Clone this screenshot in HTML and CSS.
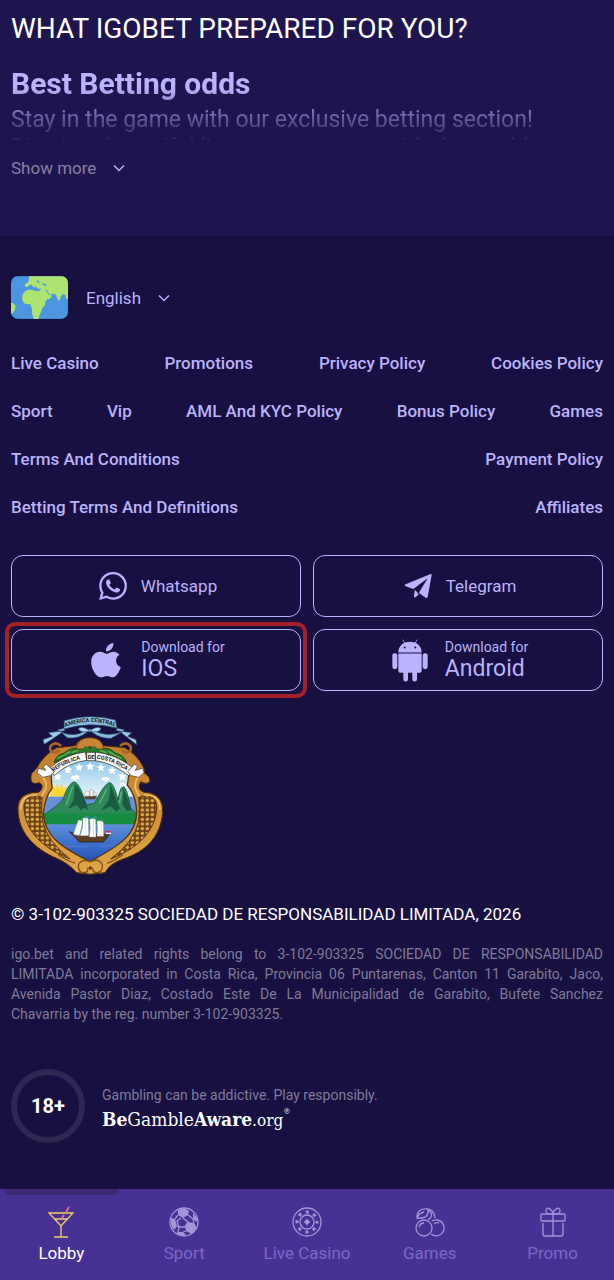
FILE: index.html
```
<!DOCTYPE html>
<html lang="en">
    <head>
        <meta charset="utf-8">
        <meta name="viewport" content="width=device-width, initial-scale=1">
        <title>IGOBET</title>
        <link rel="stylesheet" href="styles.css">
    </head>
    <body>
        <section class="about">
            <h1 class="about-title">WHAT IGOBET PREPARED FOR YOU?</h1>
            <div class="about-text">
                <h2>Best Betting odds</h2>
                <p>Stay in the game with our exclusive betting section!</p>
                <p>Dive into beautiful live sports events with the world</p>
            </div>
            <button type="button" class="toggle show-more">
                Show more
                <svg class="chevron" viewBox="0 0 12 8"><path d="M1 1.5l5 5 5-5"/></svg>
            </button>
        </section>

        <footer class="footer">
            <button type="button" class="toggle lang">
                <svg class="flag" viewBox="0 0 172 129">
                    <rect width="172" height="129" fill="#4b96df"/>
                    <g fill="#ade471">
                        <path d="M55 0h117v68l-5 2-3-13-8-3-6 8-3 12-6-3-5-15-8-3-8 2 3 7-7 7-6 0-7 9-1 11-8 7-3 12-5 9-3 12h-14l-5-14-1-17-5-13-15-1-8-8-2-12 3-11 8-8 8-4 12 0 10 4 14-1 2-7-9 1-6-7-7 3-6-8-6 0-5 7-8-1-1-8 9-5 3-7z"/>
                        <path d="M0 80l8 2 6 10-3 11-6 8-5 3z"/>
                    </g>
                    <path d="M75 15l7-2 6 9-4-1zM92 22l12 1 4 6-9-1zM105 39l13 18-3 1-12-17z" fill="#4b96df"/>
                </svg>
                <span class="lang-name">English</span>
                <svg class="chevron" viewBox="0 0 12 8"><path d="M1 1.5l5 5 5-5"/></svg>
            </button>

            <nav class="links">
                <a href="#">Live Casino</a>
                <a href="#">Promotions</a>
                <a href="#">Privacy Policy</a>
                <a href="#">Cookies Policy</a>
                <a href="#">Sport</a>
                <a href="#">Vip</a>
                <a href="#">AML And KYC Policy</a>
                <a href="#">Bonus Policy</a>
                <a href="#">Games</a>
                <a href="#">Terms And Conditions</a>
                <a href="#">Payment Policy</a>
                <a href="#">Betting Terms And Definitions</a>
                <a href="#">Affiliates</a>
            </nav>

            <div class="apps">
                <a href="#" class="app">
                    <svg class="icon-social" viewBox="0 0 24 24"><path d="M17.472 14.382c-.297-.149-1.758-.867-2.03-.967-.273-.099-.471-.148-.67.15-.197.297-.767.966-.94 1.164-.173.199-.347.223-.644.075-.297-.15-1.255-.463-2.39-1.475-.883-.788-1.48-1.761-1.653-2.059-.173-.297-.018-.458.13-.606.134-.133.298-.347.446-.52.149-.174.198-.298.298-.497.099-.198.05-.371-.025-.52-.075-.149-.669-1.612-.916-2.207-.242-.579-.487-.5-.669-.51-.173-.008-.371-.01-.57-.01-.198 0-.52.074-.792.372-.272.297-1.04 1.016-1.04 2.479 0 1.462 1.065 2.875 1.213 3.074.149.198 2.096 3.2 5.077 4.487.709.306 1.262.489 1.694.625.712.227 1.36.195 1.871.118.571-.085 1.758-.719 2.006-1.413.248-.694.248-1.289.173-1.413-.074-.124-.272-.198-.57-.347m-5.421 7.403h-.004a9.87 9.87 0 01-5.031-1.378l-.361-.214-3.741.982.998-3.648-.235-.374a9.86 9.86 0 01-1.51-5.26c.001-5.45 4.436-9.884 9.888-9.884 2.64 0 5.122 1.03 6.988 2.898a9.825 9.825 0 012.893 6.994c-.003 5.45-4.437 9.884-9.885 9.884m8.413-18.297A11.815 11.815 0 0012.05 0C5.495 0 .16 5.335.157 11.892c0 2.096.547 4.142 1.588 5.945L.057 24l6.305-1.654a11.882 11.882 0 005.683 1.448h.005c6.554 0 11.89-5.335 11.893-11.893a11.821 11.821 0 00-3.48-8.413z"/></svg>
                    <span class="app-name">Whatsapp</span>
                </a>
                <a href="#" class="app">
                    <svg class="icon-social" viewBox="0 0 84 84"><path d="M81 6q2 0 2 3L71 75q-2 5-6 2L46 64q-2-1 0-4L71 19 28 51 5 43q-6-3 0-6L78 7zM32 54l7 5 5 9-12 9q-2-1-2-5z"/></svg>
                    <span class="app-name">Telegram</span>
                </a>
                <a href="#" class="app app-marked">
                    <svg class="icon-ios" viewBox="0 0 88 104"><path d="M66 0c1 14-9 25-22 25C43 12 53 2 66 0zM46 32c5 0 11-6 21-6 7 0 13 4 17 9-15 9-13 30 4 37-4 12-13 29-23 30-7 0-10-4-18-4s-12 4-18 4C15 102 0 77 0 57 0 39 11 26 26 26c9 0 15 6 20 6z"/></svg>
                    <span class="app-label">
                        <small>Download for</small>
                        IOS
                    </span>
                </a>
                <a href="#" class="app">
                    <svg class="icon-android" viewBox="0 0 108 128">
                        <path d="M19 40h70c0-13-7-23-18-29l6-9-2-1-6 9c-10-3-20-3-30 0l-6-9-2 1 6 9C26 17 19 27 19 40z"/>
                        <path d="M19 43h70v50q0 8-8 8H75v19a7 7 0 01-14 0v-19H48v19a7 7 0 01-14 0v-19h-7q-8 0-8-8z"/>
                        <rect x="1" y="42" width="15" height="48" rx="7"/>
                        <rect x="92" y="42" width="15" height="48" rx="7"/>
                        <circle cx="38" cy="25" r="3" fill="#171040"/>
                        <circle cx="70" cy="25" r="3" fill="#171040"/>
                    </svg>
                    <span class="app-label">
                        <small>Download for</small>
                        Android
                    </span>
                </a>
            </div>

            <!-- Costa Rica coat of arms -->
            <svg class="emblem" viewBox="3 0 492 540">
                <defs>
                    <linearGradient id="sky" x1="0" y1="0" x2="0" y2="1"><stop offset="0" stop-color="#6fb9e4"/><stop offset="1" stop-color="#eef7fc"/></linearGradient>
                    <linearGradient id="sea" x1="0" y1="0" x2="0" y2="1"><stop offset="0" stop-color="#5d8fdc"/><stop offset="1" stop-color="#1f4fb5"/></linearGradient>
                    <linearGradient id="gold" x1="0" y1="0" x2="0" y2="1"><stop offset="0" stop-color="#c07a2c"/><stop offset="1" stop-color="#dfa544"/></linearGradient>
                    <pattern id="beads" width="15" height="14" patternUnits="userSpaceOnUse"><rect width="15" height="14" fill="#6b4212"/><ellipse cx="7" cy="7" rx="5.5" ry="5" fill="#dda74d"/></pattern>
                    <clipPath id="shield"><path d="M122 190Q240 120 360 188L352 240Q378 270 380 320C380 395 320 425 240 470C160 430 102 395 100 325Q105 275 126 250z"/></clipPath>
                    <path id="top-arc" d="M166 66Q240 36 318 66"/>
                    <path id="left-arc" d="M130 201Q170 168 228 161"/>
                    <path id="right-arc" d="M260 161Q315 168 362 206"/>
                </defs>
                <!-- frame -->
                <path d="M80 190Q100 150 140 128L196 122Q206 98 238 98T280 122L344 128Q384 150 402 190L404 205Q422 215 419 232 408 240 392 230 374 262 420 264 462 275 458 325C450 400 405 440 340 462Q300 475 285 503 240 512 200 503 175 475 140 460C70 430 25 380 24 315 22 275 50 262 85 262 106 250 94 226 78 236 62 236 61 222 64 208 80 205z" fill="url(#gold)" stroke="#4a2b0a" stroke-width="3"/>
                <path d="M96 276Q50 262 42 300C40 365 85 425 180 462Q112 410 98 350 92 310 96 276z" fill="url(#beads)" stroke="#5a350c" stroke-width="3"/>
                <path d="M386 276Q434 262 440 300C442 365 397 425 302 462Q372 410 386 350 390 310 386 276z" fill="url(#beads)" stroke="#5a350c" stroke-width="3"/>
                <path d="M32 315Q32 268 82 270M450 315Q450 268 402 270M86 208Q112 220 108 250L94 275M396 208Q372 220 376 250L388 275" fill="none" stroke="#f0c064" stroke-width="5"/>
                <g clip-path="url(#shield)">
                    <rect x="95" y="130" width="295" height="150" fill="url(#sky)"/>
                    <path d="M126 236l12 16 2-18 8 18 8-18 3 18 14-10-6 14 10 4-10 15h-47l2-15-8-9 12 2z" fill="#f8d838"/>
                    <rect x="95" y="275" width="295" height="60" fill="#6691d8"/>
                    <path d="M100 330Q140 305 158 285 175 232 194 230 212 238 228 300L254 295Q280 238 300 232 314 240 324 285 330 245 340 244 352 250 362 310L390 335v28H95z" fill="#2f8a5a" stroke="#174832" stroke-width="2"/>
                    <path d="M196 236l-6 50-16 26 26-12 12 16 8-8 14 6-6-22-12-26zM302 240l-6 46-22 30 28-12 18 16 10-10-14-34zM341 250l-4 50 14 18 14-4z" fill="#1b5a42"/>
                    <path d="M188 245l-20 56M290 252l-22 44M334 260l-6 34" stroke="#65b17e" stroke-width="4" fill="none"/>
                    <rect x="95" y="325" width="295" height="34" fill="#168d43"/>
                    <rect x="95" y="358" width="295" height="115" fill="url(#sea)"/>
                    <path d="M145 425h90M270 423h60" stroke="#7fa3e0" stroke-width="1"/>
                </g>
                <path d="M122 190Q240 120 360 188L352 240Q378 270 380 320C380 395 320 425 240 470C160 430 102 395 100 325Q105 275 126 250z" fill="none" stroke="#55330e" stroke-width="4"/>
                <!-- seven stars -->
                <g fill="#fff">
                    <path id="star" d="M143 202l4 8 9 1-7 6 2 9-8-4-8 4 2-9-7-6 9-1z"/>
                    <use href="#star" x="31" y="-20"/>
                    <use href="#star" x="64" y="-28"/>
                    <use href="#star" x="97" y="-30"/>
                    <use href="#star" x="130" y="-27"/>
                    <use href="#star" x="163" y="-18"/>
                    <use href="#star" x="194" y="0"/>
                    <path d="M182 219q4-10 12-7 8-6 14 3 3 8-8 8l-5 6-5-6q-8 2-8-4zM274 222q3-8 10-5 8-4 16 4-2 8-8 5l-5 6-3-5q-10 1-10-5zM330 238q3-9 10-5 8 0 7 8l-7 2-3 4-3-4q-5 0-4-5z"/>
                </g>
                <!-- ships -->
                <path d="M222 273h38l-5 10h-28z" fill="#54422f"/>
                <path d="M226 260q8-4 12 0v14h-17zM240 255q8-3 10 1v18h-10zM252 259q7 0 8 14h-8z" fill="#eee" stroke="#777" stroke-width="1"/>
                <path d="M178 380l18 18 12 13h72l12-13 7-15-20 5-75 2z" fill="#5b3d28" stroke="#211409" stroke-width="2"/>
                <path d="M205 345l-15 43 18 4q8-28 9-45zM218 340q14-5 17 2l1 50h-26q12-30 8-52zM239 342q14-4 18 2l1 52h-20q5-28 1-54zM261 348q12-3 19 3l1 43h-20q4-26 0-46z" fill="#fff" stroke="#8a98ac" stroke-width="1"/>
                <path d="M227 333v62M250 334v62M273 340v55" stroke="#a89c90" stroke-width="1"/>
                <path d="M228 334h8v5h-8zM251 334h9v5h-9z" fill="#2a8fb4"/>
                <path d="M287 378h16v5h-16z" fill="#d92b42"/>
                <path d="M287 383h16v4h-16z" fill="#fff"/>
                <!-- laurels and republic ribbon -->
                <path d="M132 173q8-25 30-28 18-18 45-15l30-6 3 10 3-10 30 6q28-3 43 15 24 4 34 28-50-30-108-30-60 0-110 30z" fill="#257d30" stroke="#124416" stroke-width="3"/>
                <path d="M142 160l22-10M162 150l19-11M185 143l20-7M335 160l-22-10M315 150l-20-11M290 143l-20-7" stroke="#6db44a" stroke-width="4"/>
                <path d="M198 132q6-34 42-34t42 34l-20 0q-22-14-44 0z" fill="#c98536" stroke="#4a2b0a" stroke-width="2"/>
                <path d="M223 125l36 22M257 125l-36 22" stroke="#2f7a2c" stroke-width="6"/>
                <path d="M118 190Q165 148 226 141L230 166Q174 173 132 212zM230 142h26v25h-26zM256 141Q320 148 368 188L358 213Q306 173 256 167z" fill="#f7f7f1" stroke="#292522" stroke-width="2"/>
                <path d="M120 188l-10-10-11 6 8 12-22-6-4 13 18 14 22-5 13-12zM364 188l9-10 10 5-7 13 22-6 4 13-16 14-22-5-11-12z" fill="#fff" stroke="#39322b" stroke-width="2"/>
                <g class="emblem-text">
                    <text><textPath href="#left-arc">REPUBLICA</textPath></text>
                    <text x="233" y="161">DE</text>
                    <text><textPath href="#right-arc">COSTA RICA</textPath></text>
                </g>
                <path d="M153 123q-16-16-31 0-7 16 10 19 14-1 15-9M330 123q17-16 31 0 7 16-10 19-14-1-15-9" fill="none" stroke="#a76622" stroke-width="8"/>
                <!-- upper blue ribbon -->
                <path d="M163 47Q240 24 316 45l5 24Q240 48 162 72z" fill="#87bfdf" stroke="#32566c" stroke-width="2"/>
                <path d="M165 70l-22 4 12 9-52 35-4-14 28-10-12-11 48-6zM320 70l23 4-9 9 46 36-2-15-25-10 12-11-45-6z" fill="#9dcdea" stroke="#32566c" stroke-width="2"/>
                <path d="M154 82q40 16 72-5l13-5 14 5q35 20 82 5l-32 18q-31 1-59-20h-12q-27 23-60 18z" fill="#87bfdf" stroke="#32566c" stroke-width="2"/>
                <path d="M236 75q-22-14-31-4 5 13 31 8zM242 75q22-14 31-4-4 13-31 8z" fill="#a8d5ef" stroke="#32566c" stroke-width="2"/>
                <g class="emblem-text"><text><textPath href="#top-arc">AMERICA CENTRAL</textPath></text></g>
                <!-- lower ornament -->
                <path d="M205 480q10-20 36-10 26-12 36 9 2 23-17 24-14-1-11-15M205 480q-1 23 17 23 14-1 11-15M145 450q35 22 50 24M338 450q-30 20-47 25" fill="none" stroke="#835019" stroke-width="4"/>
                <circle cx="241" cy="489" r="5" fill="#553411"/>
            </svg>

            <p class="copyright">© 3-102-903325 SOCIEDAD DE RESPONSABILIDAD LIMITADA, 2026</p>
            <p class="legal">igo.bet and related rights belong to 3-102-903325 SOCIEDAD DE RESPONSABILIDAD LIMITADA&nbsp;incorporated in Costa Rica, Provincia 06 Puntarenas, Canton 11 Garabito, Jaco, Avenida Pastor Diaz, Costado Este De La Municipalidad de Garabito, Bufete Sanchez Chavarria&nbsp;by&nbsp;the&nbsp;reg. number 3-102-903325.</p>

            <div class="responsible">
                <div class="age">18+</div>
                <div class="responsible-info">
                    <p class="responsible-text">Gambling can be addictive. Play responsibly.</p>
                    <a href="#" class="aware"><b>Be</b>Gamble<b>Aware</b><span class="org">.org</span><sup>®</sup></a>
                </div>
            </div>
        </footer>

        <nav class="tabbar">
            <a href="#" class="tab tab-active">
                <svg viewBox="0 0 32 32">
                    <g stroke="#f3cf63"><path d="M4 7h24L16 20zM9 13h14M16 20v11M9 31h14"/></g>
                    <path d="M24 1l-3 5M19 9l-2 3" stroke="#e85fa8" stroke-width="2"/>
                </svg>
                Lobby
            </a>
            <a href="#" class="tab">
                <svg viewBox="0 0 32 32">
                    <circle cx="16" cy="16" r="14"/>
                    <path class="fill" d="M10 4l6-2 5 3-1 4-5 3-5-3zM3 12l4 1 2 7-3 4q-4-5-3-12zM20 16l6 1 3 5-5 6-6-3-1-5zM25 7l4 5 0 4-4-3zM10 26l5 0 3 3-2 1q-5 0-8-3z"/>
                    <path d="M15 12l5 4-3 5h-6l-2-6 4-3M20 9l5 4 1 4M10 9l-3 4M9 20l2 1-1 5M18 25l-3 1"/>
                </svg>
                Sport
            </a>
            <a href="#" class="tab">
                <svg viewBox="0 0 32 32">
                    <circle cx="16" cy="16" r="14"/>
                    <circle cx="16" cy="16" r="7"/>
                    <circle cx="16" cy="16" r="10" stroke-width="3" stroke-dasharray="3 4.85" stroke-dashoffset="1.5"/>
                    <path class="fill" d="M16 12.500l1.500 2 2 1.500-2 1.500-1.500 2-1.500-2-2-1.500 2-1.500z"/>
                </svg>
                Live Casino
            </a>
            <a href="#" class="tab">
                <svg viewBox="0 0 32 32">
                    <circle cx="10" cy="22" r="8"/>
                    <path d="M5 21q1-4 5-4M18 15a8 8 0 11-1 13M20 18q2-2 5-1M3 11Q3 2 14 3q1 8-6 9l-5 0q2-5 7-6M14 3q6 1 7 9M14 4q5 3 3 7l-3 3"/>
                </svg>
                Games
            </a>
            <a href="#" class="tab">
                <svg viewBox="0 0 32 32">
                    <rect x="4" y="8" width="24" height="7" rx="1"/>
                    <path d="M6 17v11q0 2 2 2h16q2 0 2-2V17M16 8v22M16 8Q8 9 9 4q2-4 6 1l1 2 1-2q4-5 6-1 1 5-7 4"/>
                </svg>
                Promo
            </a>
        </nav>
    </body>
</html>
```
FILE: styles.css
```
* {
    box-sizing: border-box;
}

body {
    margin: 0;
    font-family: Roboto, sans-serif;
    font-size: 17px;
    line-height: 20px;
    color: #bbb3fb;
    background: #171040;
}

h1, h2, p {
    margin: 0;
}

a {
    color: inherit;
    text-decoration: none;
}

svg {
    display: block;
    flex: none;
}

/* about */
.about {
    padding: 11px 11px 58px;
    background: #1f154e;
}

.about-title {
    margin-bottom: 20px;
    font-size: 28px;
    line-height: 35px;
    font-weight: 400;
    color: #fff;
}

.about-text {
    height: 74px;
    margin-bottom: 18px;
    overflow: hidden;
    font-size: 23px;
    line-height: 28px;
    -webkit-mask-image: linear-gradient(#000 30%, transparent 105%);
    mask-image: linear-gradient(#000 30%, transparent 105%);
}

.about-text h2 {
    margin-bottom: 5px;
    font-size: 30px;
    line-height: 35px;
}

.toggle {
    display: flex;
    align-items: center;
    padding: 0;
    border: 0;
    background: none;
    font: inherit;
    color: inherit;
    cursor: pointer;
}

.chevron {
    width: 12px;
    height: 8px;
    margin-left: 17px;
    fill: none;
    stroke: #bbb3fb;
    stroke-width: 1.5;
}

.show-more {
    color: #88829f;
}

/* footer */
.footer {
    padding: 40px 11px 137px;
}

.flag {
    width: 57px;
    height: 43px;
    margin-right: 18px;
    border-radius: 7px;
}

.links {
    display: flex;
    flex-wrap: wrap;
    justify-content: space-between;
    gap: 28px 40px;
    margin: 34px 0 38px;
    font-weight: 500;
}

.apps {
    display: grid;
    grid-template-columns: 1fr 1fr;
    gap: 12px;
}

.app {
    position: relative;
    display: flex;
    align-items: center;
    justify-content: center;
    height: 62px;
    padding-left: 4px;
    border: 1px solid #bbb3fb;
    border-radius: 12px;
}

.app svg {
    fill: #bbb3fb;
}

.icon-social {
    width: 28px;
    height: 28px;
    margin-right: 14px;
}

.icon-ios {
    width: 30px;
    height: 35px;
    margin-right: 20px;
}

.icon-android {
    width: 36px;
    height: 43px;
    margin-right: 17px;
}

.app-label {
    font-size: 23px;
    line-height: 26px;
}

.app-label small {
    display: block;
    font-size: 14px;
    line-height: 18px;
}

/* highlight frame round the download button */
.app-marked::after {
    content: "";
    position: absolute;
    inset: -8px -7px;
    border: 4px solid #a32126;
    border-radius: 10px;
}

.emblem {
    width: 164px;
    height: 180px;
    margin: 14px 0 19px;
}

.emblem-text {
    font-size: 17px;
    font-weight: 700;
    fill: #222;
}

.copyright {
    margin-bottom: 20px;
    font-size: 17px;
    color: #fff;
}

.legal {
    margin-bottom: 45px;
    font-size: 14px;
    text-align: justify;
    color: #807b98;
}

.responsible {
    display: flex;
    align-items: center;
    gap: 17px;
}

.responsible-info {
    padding-top: 6px;
}

.age {
    display: flex;
    align-items: center;
    justify-content: center;
    width: 74px;
    height: 74px;
    border: 6px solid #2e2852;
    border-radius: 50%;
    font-size: 20px;
    font-weight: 700;
    color: #fff;
}

.responsible-text {
    font-size: 14px;
    color: #807b98;
}

.aware {
    display: block;
    font-family: "DejaVu Serif Condensed", "DejaVu Serif", serif;
    font-size: 19px;
    line-height: 28px;
    color: #fff;
}

.org {
    font-size: 17px;
}

.aware sup {
    font-size: 8px;
    line-height: 8px;
    vertical-align: 12px;
}

/* bottom bar */
.tabbar {
    position: fixed;
    left: 0;
    right: 0;
    bottom: 0;
    display: grid;
    grid-template-columns: repeat(5, 1fr);
    height: 91px;
    background: #483194;
}

.tab {
    position: relative;
    display: flex;
    flex-direction: column;
    align-items: center;
    gap: 5px;
    padding-top: 17px;
    white-space: nowrap;
    color: #7a68c6;
}

.tab svg {
    width: 32px;
    height: 32px;
    overflow: visible;
    fill: none;
    stroke: #a594d8;
    stroke-width: 1.3;
}

.tab .fill {
    fill: #a594d8;
    stroke: none;
}

.tab-active {
    color: #fff;
}

.tab-active::before {
    content: "";
    position: absolute;
    top: 0;
    left: 4px;
    right: 4px;
    height: 6px;
    border-radius: 0 0 6px 6px;
    background: #3d2a75;
}
```
